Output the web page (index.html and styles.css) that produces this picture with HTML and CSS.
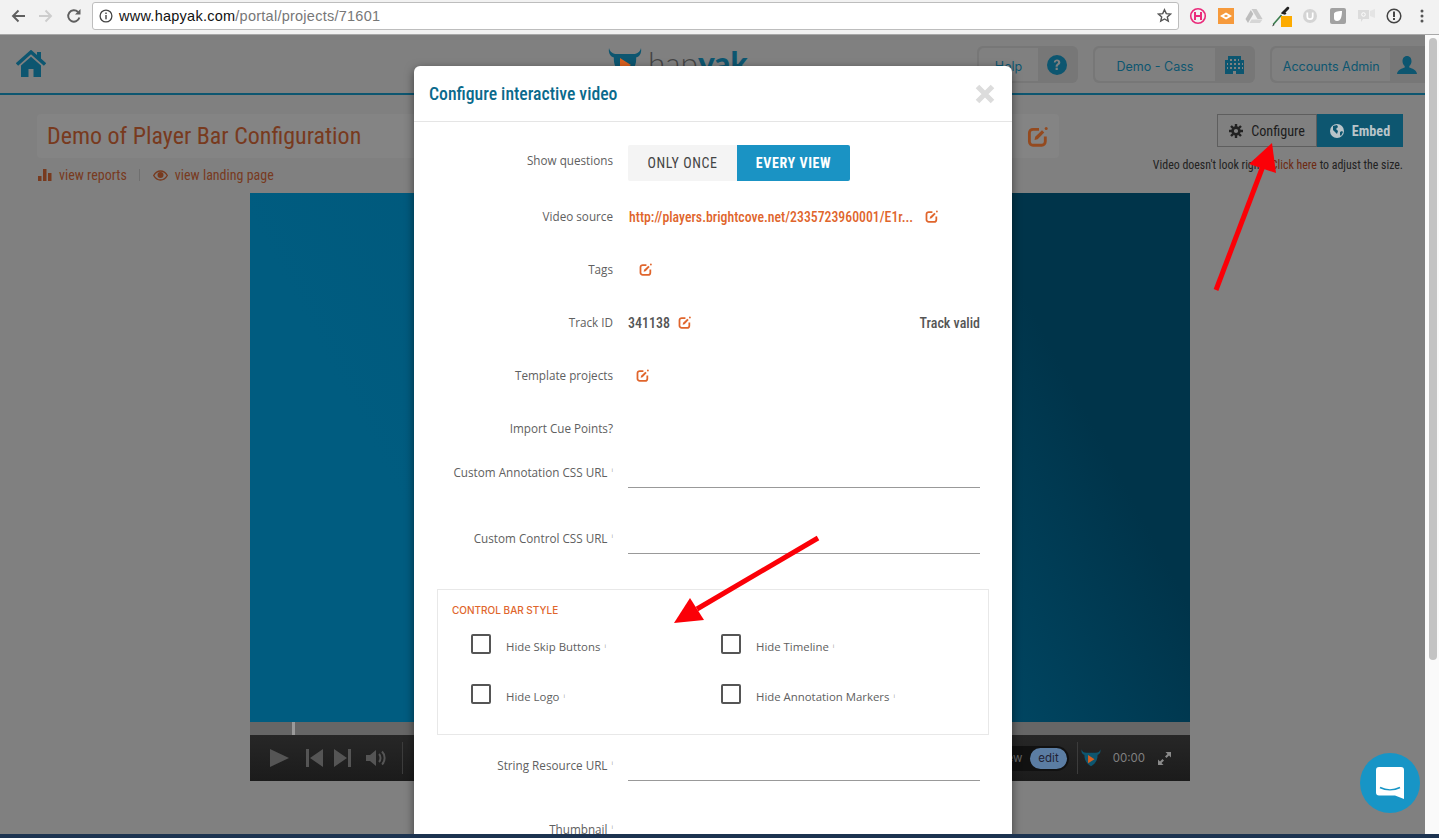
FILE: index.html
```html
<!DOCTYPE html>
<html lang="en">

<head>
    <meta charset="UTF-8">
    <title>HapYak - Demo of Player Bar Configuration</title>
    <link rel="stylesheet" href="styles.css">
</head>

<body>
    <svg class="defs" width="0" height="0">
        <symbol id="edit" viewBox="0 0 14 14">
            <path d="M8 2.2H4A2.4 2.4 0 0 0 1.6 4.6v5.8A2.4 2.4 0 0 0 4 12.8h5.8a2.4 2.4 0 0 0 2.4-2.4V7" fill="none" stroke="currentColor" stroke-width="1.9" />
            <path d="M5 9.4l.5-2.2L10 2.9l1.5 1.5L7.1 8.9z" fill="currentColor" />
            <circle cx="12.8" cy="1.6" r="1" fill="currentColor" />
        </symbol>
        <symbol id="bull" viewBox="0 0 34 30">
            <path d="M1 0c-1 6 2 10 8 10h16c6 0 9-4 8-10-1 4-4 6-8 6H9C5 6 2 4 1 0z" fill="currentColor" />
            <path d="M6 8h22c1 8-2 16-11 21C8 24 5 16 6 8z" fill="currentColor" />
            <path d="M12 10l11 7-11 7z" fill="#d9601f" />
        </symbol>
    </svg>

    <!-- Browser toolbar -->
    <div class="chrome">
        <div class="nav-buttons">
            <span class="slot">
                <svg width="16" height="16" viewBox="0 0 16 16"><path d="M15 8H3M8.5 2.5L3 8l5.5 5.500" fill="none" stroke="#5f5f5f" stroke-width="1.900" /></svg>
            </span>
            <span class="slot">
                <svg width="16" height="16" viewBox="0 0 16 16"><path d="M1 8h12M7.500 2.500L13 8l-5.500 5.500" fill="none" stroke="#cdcdcd" stroke-width="1.900" /></svg>
            </span>
            <span class="slot">
                <svg width="16" height="16" viewBox="0 0 16 16"><path d="M13.400 9.500A5.700 5.700 0 1 1 12 4" fill="none" stroke="#5f5f5f" stroke-width="1.900" /><path d="M14.500 1v5.500H9z" fill="#5f5f5f" /></svg>
            </span>
        </div>
        <div class="address">
            <svg width="14" height="14" viewBox="0 0 14 14">
                <circle cx="7" cy="7" r="5.900" fill="none" stroke="#444" stroke-width="1.300" />
                <rect x="6.300" y="6" width="1.400" height="4.300" fill="#444" />
                <rect x="6.300" y="3.500" width="1.400" height="1.500" fill="#444" />
            </svg>
            <span class="url"><b>www.hapyak.com</b>/portal/projects/71601</span>
            <svg class="star" width="15" height="15" viewBox="0 0 16 16"><path d="M8 1.800l1.900 4.200 4.500.5-3.400 3 1 4.500L8 11.700 4 14l1-4.500-3.400-3 4.500-.5z" fill="none" stroke="#555" stroke-width="1.500" /></svg>
        </div>
        <div class="extensions">
            <span class="slot">
                <svg width="18" height="18" viewBox="0 0 18 18">
                    <circle cx="9" cy="9" r="7.300" fill="none" stroke="#ea2b7b" stroke-width="1.600" />
                    <path d="M6 5v8M12 5v8M6 9h6" fill="none" stroke="#ea2b7b" stroke-width="2" />
                </svg>
            </span>
            <span class="slot">
                <svg width="16" height="16" viewBox="0 0 16 16">
                    <rect width="16" height="16" fill="#f69a3c" />
                    <path d="M8 4.500L14 8l-6 3.500L2 8z" fill="#fff" />
                    <path d="M8 6.700L10.300 8 8 9.300 5.700 8z" fill="#f69a3c" />
                </svg>
            </span>
            <span class="slot">
                <svg width="18" height="16" viewBox="0 0 18 16">
                    <path d="M6.500 1h5l6 10h-5z" fill="#c9c9c9" />
                    <path d="M5.800 2L.5 11 3 15l5.300-9z" fill="#bdbdbd" />
                    <path d="M4.500 15h10.500l2.500-3.500H6.600z" fill="#d6d6d6" />
                </svg>
            </span>
            <span class="slot">
                <svg width="22" height="24" viewBox="0 0 22 24">
                    <path d="M2.200 20.500L10.500 11" fill="none" stroke="#3c7d4f" stroke-width="1.600" />
                    <path d="M1 22.500l1.500-2.500 1 1z" fill="#222" />
                    <path d="M10 9l2.500-2.500L16 3c1.500-1 3 .5 2 2l-3.500 3.500 1 1-1.500 1.200-3.500-1z" fill="#222" />
                    <rect x="10" y="12" width="11" height="11" fill="#fdab00" />
                </svg>
            </span>
            <span class="slot">
                <svg width="16" height="16" viewBox="0 0 16 16">
                    <circle cx="8" cy="8" r="7" fill="#d4d4d4" />
                    <path d="M5.300 4.500v4a2.700 2.700 0 0 0 5.400 0v-4" fill="none" stroke="#fff" stroke-width="1.700" />
                </svg>
            </span>
            <span class="slot">
                <svg width="16" height="16" viewBox="0 0 16 16">
                    <rect width="16" height="16" rx="2" fill="#a2a2a2" />
                    <path d="M4 6c0-2 3-3 8-3 0 5-1 10-5 10-2 0-3-1-3-3z" fill="#fff" />
                </svg>
            </span>
            <span class="slot">
                <svg width="17" height="15" viewBox="0 0 17 15">
                    <path d="M0 2h11v9H5l-2 3v-3H0z" fill="#dcdcdc" />
                    <path d="M12 3l5-2v9l-5-2z" fill="#e4e4e4" />
                    <circle cx="5.500" cy="6.500" r="1.800" fill="none" stroke="#fff" />
                </svg>
            </span>
            <span class="slot">
                <svg width="16" height="16" viewBox="0 0 16 16">
                    <circle cx="8" cy="8" r="6.800" fill="none" stroke="#444" stroke-width="1.500" />
                    <rect x="7" y="3.500" width="2" height="5.500" fill="#444" />
                    <rect x="7" y="10" width="2" height="2" fill="#444" />
                </svg>
            </span>
            <span class="slot">
                <svg width="4" height="14" viewBox="0 0 4 14">
                    <circle cx="2" cy="2" r="1.500" fill="#555" />
                    <circle cx="2" cy="7" r="1.500" fill="#555" />
                    <circle cx="2" cy="12" r="1.500" fill="#555" />
                </svg>
            </span>
        </div>
    </div>

    <div class="window">
        <div class="page">
            <header class="topbar">
                <svg class="home" width="30" height="28" viewBox="0 0 30 28">
                    <path d="M1 14.500L15 2l14 12.500" fill="none" stroke="#0d5670" stroke-width="3.400" />
                    <path d="M21 2h4v8l-4-3.500z" fill="#0d5670" />
                    <path d="M5 15.500L15 6.700l10 8.800V27h-7.500v-8h-5v8H5z" fill="#0d5670" />
                </svg>
                <div class="logo">
                    <svg class="logo-mark" width="34" height="30"><use href="#bull" /></svg>
                    <span class="logo-text">hap<b>yak</b></span>
                </div>
                <div class="account-groups">
                    <div class="group group-help">
                        <span class="group-label">Help</span>
                        <span class="group-icon">
                            <svg width="20" height="20" viewBox="0 0 20 20">
                                <circle cx="10" cy="10" r="10" fill="#0d5670" />
                                <path d="M6.800 7.500C7 5.500 8.300 4.600 10 4.600c2 0 3.300 1.200 3.300 2.800 0 2.400-2.600 2.300-2.600 4.300H8.600c0-3 2.500-2.900 2.500-4.200 0-.7-.5-1.200-1.200-1.200-.8 0-1.200.5-1.300 1.300z" fill="#808080" />
                                <rect x="8.600" y="12.700" width="2.200" height="2.300" fill="#808080" />
                            </svg>
                        </span>
                    </div>
                    <div class="group group-demo">
                        <span class="group-label">Demo - Cass</span>
                        <span class="group-icon">
                            <svg width="19" height="18" viewBox="0 0 19 18">
                                <path d="M3 0h13v4h3v14H0V4h3z" fill="#0d5670" />
                                <path d="M5 3h2v2H5zM9 3h2v2H9zM13 3h1v2h-1zM5 7h2v2H5zM9 7h2v2H9zM13 7h2v2h-2zM2 7h1v2H2zM17 7h1v2h-1zM5 11h2v2H5zM9 11h2v2H9zM13 11h2v2h-2zM2 11h1v2H2zM17 11h1v2h-1zM8 15h3v3H8z" fill="#808080" />
                            </svg>
                        </span>
                    </div>
                    <div class="group group-account">
                        <span class="group-label">Accounts Admin</span>
                        <span class="group-icon">
                            <svg width="20" height="19" viewBox="0 0 20 19">
                                <path d="M10 0c3 0 4.500 2.400 4.500 5.200 0 2-1 3.800-2.200 4.800v1.500c3.500 1.300 7.200 2.400 7.700 6.500H0c.5-4.100 4.200-5.200 7.700-6.500V10C6.500 9 5.500 7.200 5.500 5.200 5.500 2.400 7 0 10 0z" fill="#0d5670" />
                            </svg>
                        </span>
                    </div>
                </div>
            </header>

            <section class="project">
                <div class="project-head">
                    <div class="project-info">
                        <div class="title-box">
                            <h1>Demo of Player Bar Configuration</h1>
                            <svg class="title-edit" width="21" height="21"><use href="#edit" /></svg>
                        </div>
                        <div class="project-links">
                            <svg width="14" height="12" viewBox="0 0 14 12"><path d="M0 7h3.500v5H0zM5 0h3.500v12H5zM10 4h3.500v8H10z" fill="#783a1e" /></svg>
                            <a>view reports</a>
                            <span class="divider"></span>
                            <svg width="15" height="11" viewBox="0 0 15 11">
                                <path d="M.7 5.500C2.500 2.400 4.800 1 7.500 1s5 1.400 6.800 4.500C12.500 8.600 10.200 10 7.500 10S2.500 8.600.7 5.500z" fill="none" stroke="#783a1e" stroke-width="1.400" />
                                <circle cx="7.500" cy="5" r="3" fill="#783a1e" />
                            </svg>
                            <a>view landing page</a>
                        </div>
                    </div>
                    <div class="project-actions">
                        <div class="action-buttons">
                            <button class="btn-configure">
                                <svg width="14" height="14" viewBox="0 0 14 14">
                                    <circle cx="7" cy="7" r="3.400" fill="none" stroke="#222" stroke-width="2.600" />
                                    <path d="M7 0v3M7 11v3M0 7h3M11 7h3M2 2l2.200 2.200M9.800 9.800L12 12M12 2L9.800 4.200M4.200 9.800L2 12" stroke="#222" stroke-width="2.400" />
                                </svg>
                                Configure
                            </button>
                            <button class="btn-embed">
                                <svg width="14" height="14" viewBox="0 0 14 14">
                                    <circle cx="7" cy="7" r="7" fill="#b9c4c9" />
                                    <path d="M3 2l4-1 1 2-2 2 2 2-1 3-2-2-2-2zM10 8l2-1 1 1-2 4-1-1z" fill="#0d5670" />
                                </svg>
                                Embed
                            </button>
                        </div>
                        <p class="size-hint">Video doesn't look right? <a>Click here</a> to adjust the size.</p>
                    </div>
                </div>

                <div class="player">
                    <div class="video"></div>
                    <div class="scrub"><span class="scrub-handle"></span></div>
                    <div class="controls">
                        <div class="controls-left">
                            <svg class="c-play" width="20" height="20" viewBox="0 0 20 20"><path d="M0 1l19 9-19 9z" /></svg>
                            <svg class="c-prev" width="18" height="18" viewBox="0 0 18 18"><path d="M0 0h3v18H0zM17 0v18L4 9z" /></svg>
                            <svg class="c-next" width="18" height="18" viewBox="0 0 18 18"><path d="M18 0h-3v18h3zM1 0v18l13-9z" /></svg>
                            <svg class="c-volume" width="21" height="18" viewBox="0 0 21 18">
                                <path d="M0 6h4l6-5v16l-6-5H0z" />
                                <path d="M13 5c2 2 2 6 0 8M16 2.500c3.500 3.500 3.500 9.500 0 13" fill="none" stroke="#555" stroke-width="2" />
                            </svg>
                            <span class="c-sep"></span>
                        </div>
                        <div class="controls-right">
                            <div class="mode-toggle"><span class="mode-view">view</span><span class="mode-edit">edit</span></div>
                            <span class="c-sep"></span>
                            <svg class="c-logo" width="20" height="18"><use href="#bull" /></svg>
                            <span class="c-time">00:00</span>
                            <svg width="13" height="13" viewBox="0 0 13 13"><path d="M7.500 0H13v5.500l-2-2-2.500 2.500-1.500-1.500L9.500 2zM5.500 13H0V7.500l2 2L4.500 7 6 8.500 3.500 11z" fill="#8a8a8a" /></svg>
                        </div>
                    </div>
                </div>
            </section>
        </div>

        <div class="scrollbar"><span class="scroll-thumb"></span></div>

        <!-- Modal -->
        <div class="modal">
            <div class="modal-head">
                <h2>Configure interactive video</h2>
                <svg width="20" height="20" viewBox="0 0 20 20"><path d="M2.500 2.500l15 15M17.500 2.500l-15 15" stroke="#dcdcdc" stroke-width="5" /></svg>
            </div>
            <div class="form">
                <div class="row row-seg">
                    <label>Show questions</label>
                    <div class="value">
                        <div class="segment"><span class="seg-off">ONLY ONCE</span><span class="seg-on">EVERY VIEW</span></div>
                    </div>
                </div>
                <div class="row">
                    <label>Video source</label>
                    <div class="value">
                        <a class="source">http://players.brightcove.net/2335723960001/E1r...</a>
                        <svg class="edit edit-source" width="13" height="13"><use href="#edit" /></svg>
                    </div>
                </div>
                <div class="row">
                    <label>Tags</label>
                    <div class="value"><svg class="edit edit-tags" width="13" height="13"><use href="#edit" /></svg></div>
                </div>
                <div class="row">
                    <label>Track ID</label>
                    <div class="value">
                        <strong>341138</strong>
                        <svg class="edit edit-track" width="13" height="13"><use href="#edit" /></svg>
                        <strong class="track-valid">Track valid</strong>
                    </div>
                </div>
                <div class="row">
                    <label>Template projects</label>
                    <div class="value"><svg class="edit edit-template" width="13" height="13"><use href="#edit" /></svg></div>
                </div>
                <div class="row">
                    <label>Import Cue Points?</label>
                    <div class="value"></div>
                </div>
                <div class="row row-input row-input-first">
                    <label>Custom Annotation CSS URL<sup>i</sup></label>
                    <div class="value"></div>
                </div>
                <div class="row row-input row-input-second">
                    <label>Custom Control CSS URL<sup>i</sup></label>
                    <div class="value"></div>
                </div>

                <fieldset class="bar-style">
                    <h3>CONTROL BAR STYLE</h3>
                    <div class="checks">
                        <div class="check"><span class="box"></span>Hide Skip Buttons<sup>i</sup></div>
                        <div class="check"><span class="box"></span>Hide Timeline<sup>i</sup></div>
                        <div class="check"><span class="box"></span>Hide Logo<sup>i</sup></div>
                        <div class="check"><span class="box"></span>Hide Annotation Markers<sup>i</sup></div>
                    </div>
                </fieldset>

                <div class="row row-input row-input-string">
                    <label>String Resource URL<sup>i</sup></label>
                    <div class="value"></div>
                </div>
                <div class="row row-thumb">
                    <label>Thumbnail<sup>i</sup></label>
                    <div class="value"></div>
                </div>
            </div>
        </div>

        <div class="chat">
            <svg width="28" height="32" viewBox="0 0 28 32">
                <path d="M3 0h22a3 3 0 0 1 3 3v29l-9-3.500H3a3 3 0 0 1-3-3V3a3 3 0 0 1 3-3z" fill="#fff" />
                <path d="M4 20.500c6 3 14 3 20 0" fill="none" stroke="#1795c6" stroke-width="1.700" />
            </svg>
        </div>
    </div>

    <div class="desktop-edge"></div>

    <!-- Red annotation arrows -->
    <svg class="arrows" width="1439" height="838" viewBox="0 0 1439 838">
        <path d="M1216 290L1263 166" stroke="#fb0007" stroke-width="5" />
        <path d="M1272 143l-23 21 27 9z" fill="#fb0007" />
        <path d="M818 538L697 609" stroke="#fb0007" stroke-width="5" />
        <path d="M674 623l16-25 14 22z" fill="#fb0007" />
    </svg>
</body>

</html>
```

FILE: styles.css
```css
* {
    box-sizing: border-box;
}

html,
body {
    margin: 0;
    height: 838px;
    overflow: hidden;
}

body {
    display: flex;
    flex-direction: column;
    font-family: "Open Sans", sans-serif;
    background-color: #808080;
}

.defs {
    position: absolute;
}

.slot {
    display: flex;
    align-items: center;
    justify-content: center;
    width: 28px;
    height: 28px;
}

/* Browser toolbar */
.chrome {
    display: flex;
    align-items: center;
    height: 35px;
    padding: 0 3px 3px 4px;
    background-color: #f2f2f2;
    border-bottom: 1px solid #a8a8a8;
}

.nav-buttons,
.extensions {
    display: flex;
}

.nav-buttons {
    margin-right: 4px;
}

.address {
    display: flex;
    align-items: center;
    flex: 1;
    height: 28px;
    margin-right: 5px;
    padding: 0 6px;
    background-color: #fff;
    border: 1px solid #bdbdbd;
    border-radius: 3px;
}

.url {
    flex: 1;
    margin-left: 6px;
    font-family: "Liberation Sans", sans-serif;
    font-size: 14.5px;
    letter-spacing: 0.25px;
    color: #777;
}

.url b {
    font-weight: 400;
    color: #111;
}

/* Page behind the modal */
.window {
    position: relative;
    display: flex;
    flex: 1;
    overflow: hidden;
}

.page {
    flex: 1;
    min-width: 0;
    overflow: hidden;
}

.scrollbar {
    width: 14px;
    padding: 3px 2px 0 4px;
    background-color: #fafafa;
}

.scroll-thumb {
    display: block;
    height: 622px;
    background-color: #c3c3c3;
    border-radius: 4px;
}

.topbar {
    display: flex;
    align-items: flex-start;
    height: 60px;
    padding: 16px 0 0 16px;
    border-bottom: 2px solid #0d5670;
}

.home {
    margin-top: -1px;
}

.logo {
    display: flex;
    align-items: flex-start;
    margin-left: 562px;
    margin-top: -3px;
}

.logo-mark {
    color: #0d5670;
}

.logo-text {
    margin: -4px 0 0 6px;
    font-family: Lato, sans-serif;
    font-size: 31.500px;
    font-weight: 300;
    color: #444;
}

.logo-text b {
    font-weight: 900;
    color: #0d5670;
}

.account-groups {
    display: flex;
    gap: 15px;
    margin-left: auto;
    margin-top: -5px;
}

.group {
    display: flex;
    height: 37px;
    padding: 2px;
    background-color: #777;
    border-radius: 6px 0 0 6px;
    overflow: hidden;
    font-family: Inter, sans-serif;
    font-size: 12.500px;
    color: #0d5670;
}

.group-label {
    display: flex;
    align-items: center;
    justify-content: center;
    padding-top: 3px;
    background-color: #808080;
    border-radius: 5px 0 0 5px;
}

.group-icon {
    display: flex;
    align-items: center;
    justify-content: center;
    padding-top: 1px;
}

.group-help {
    width: 101px;
    border-radius: 6px;
}

.group-help .group-label {
    width: 59px;
}

.group-help .group-icon {
    width: 38px;
}

.group-demo {
    width: 162px;
    border-radius: 6px;
}

.group-demo .group-label {
    width: 120px;
}

.group-demo .group-icon {
    width: 38px;
}

.group-account {
    width: 155px;
}

.group-account .group-label {
    width: 120px;
}

.group-account .group-icon {
    width: 33px;
}

.project {
    padding: 19px 22px 0 37px;
}

.project-head {
    display: flex;
    justify-content: space-between;
}

.title-box {
    display: flex;
    align-items: center;
    justify-content: space-between;
    width: 1022px;
    height: 44px;
    padding: 0 11px 0 10px;
    background-color: #848484;
    border-radius: 4px;
}

h1 {
    margin: 0;
    font-family: "Roboto Condensed", "Liberation Sans Narrow", Roboto, sans-serif;
    font-size: 24px;
    font-weight: 400;
    color: #783a1e;
}

.title-edit {
    color: #944a1f;
}

.project-links {
    display: flex;
    align-items: center;
    height: 36px;
    margin-top: -1px;
    padding-left: 1px;
    font-family: "Roboto Condensed", "Liberation Sans Narrow", Roboto, sans-serif;
    font-size: 14px;
    color: #783a1e;
}

.project-links a {
    margin-left: 7px;
}

.divider {
    width: 1px;
    height: 12px;
    margin: 0 13px 0 12px;
    background-color: #6f6f6f;
}

.project-actions {
    display: flex;
    flex-direction: column;
    align-items: flex-end;
}

.action-buttons {
    display: flex;
}

.action-buttons button {
    display: flex;
    align-items: center;
    justify-content: center;
    gap: 8px;
    height: 33px;
    padding: 0;
    font-family: "Roboto Condensed", "Liberation Sans Narrow", Roboto, sans-serif;
    font-size: 14.200px;
}

.btn-configure {
    width: 100px;
    background-color: #808080;
    border: 1px solid #5e5e5e;
    color: #1c1c1c;
}

.btn-embed {
    width: 86px;
    background-color: #0d5670;
    border: 1px solid #0d5670;
    font-weight: 700;
    color: #b9c4c9;
}

.size-hint {
    margin: 11px 0 0;
    font-family: "Roboto Condensed", "Liberation Sans Narrow", Roboto, sans-serif;
    font-size: 11.900px;
    white-space: nowrap;
    color: #222;
}

.size-hint a {
    color: #6d2a12;
}

.player {
    width: 940px;
    margin-left: 213px;
}

.video {
    height: 529px;
    background: linear-gradient(62deg, #005c80 22%, #00597c 40%, #00344a 82%);
}

.scrub {
    height: 13px;
    padding-left: 42px;
    background-color: #666;
}

.scrub-handle {
    display: block;
    width: 3px;
    height: 13px;
    background-color: #9a9a9a;
}

.controls {
    display: flex;
    align-items: center;
    justify-content: space-between;
    height: 46px;
    padding: 0 19px 0 20px;
    background: linear-gradient(#272727, #1b1b1b);
}

.controls-left,
.controls-right {
    display: flex;
    align-items: center;
    height: 100%;
}

.controls svg {
    fill: #555;
}

.controls-left .c-play {
    margin-right: 16px;
}

.controls-left .c-prev {
    margin-right: 9px;
}

.controls-left .c-next {
    margin-right: 15px;
}

.controls-left .c-volume {
    margin-right: 9px;
}

.c-sep {
    width: 1px;
    height: 32px;
    margin-left: 6px;
    background-color: #3c3c3c;
}

.mode-toggle {
    display: flex;
    align-items: center;
    height: 25px;
    padding: 2px;
    background-color: #111;
    border-radius: 13px;
    font-family: Inter, sans-serif;
    font-size: 11.500px;
    color: #666;
}

.mode-view {
    padding: 0 8px;
}

.mode-edit {
    display: flex;
    align-items: center;
    height: 21px;
    padding: 0 8px;
    background-color: #5b7da3;
    border-radius: 11px;
    color: #223;
}

.controls-right .c-sep {
    margin: 0 1px 0 8px;
}

.c-logo {
    margin-left: 2px;
    color: #0d5670;
}

.c-time {
    margin: 0 13px 0 12px;
    font-family: Inter, sans-serif;
    font-size: 11.500px;
    color: #808080;
}

/* Modal */
.modal {
    position: absolute;
    top: 31px;
    left: 414px;
    width: 598px;
    height: 800px;
    background-color: #fff;
    border-radius: 6px 6px 0 0;
    box-shadow: 0 3px 10px rgba(0, 0, 0, 0.5);
}

.modal-head {
    display: flex;
    align-items: center;
    justify-content: space-between;
    height: 56px;
    padding: 0 17px 0 15px;
    border-bottom: 1px solid #e5e5e5;
}

h2 {
    margin: 0;
    font-family: "Roboto Condensed", "Liberation Sans Narrow", Roboto, sans-serif;
    font-size: 17.700px;
    font-weight: 500;
    color: #0a6a8c;
}

.form {
    padding-top: 23px;
}

.row {
    display: flex;
    align-items: center;
    height: 53px;
}

.row label {
    width: 199px;
    margin-top: -2px;
    text-align: right;
    font-size: 11.700px;
    color: #606060;
}

.value {
    display: flex;
    align-items: center;
    width: 352px;
    margin-left: 15px;
}

.row-seg {
    height: 36px;
    margin-bottom: 9px;
}

.row-seg label {
    margin-top: -6px;
}

.segment {
    display: flex;
    height: 36px;
    font-family: "Roboto Condensed", "Liberation Sans Narrow", Roboto, sans-serif;
    font-size: 14px;
    letter-spacing: 0.6px;
    line-height: 36px;
    text-align: center;
    border-radius: 2px;
    overflow: hidden;
}

.seg-off {
    width: 109px;
    background-color: #f4f4f4;
    color: #444;
}

.seg-on {
    width: 113px;
    background-color: #1a93c4;
    font-weight: 700;
    color: #fff;
}

.source {
    margin-left: 1px;
    font-family: "Roboto Condensed", "Liberation Sans Narrow", Roboto, sans-serif;
    font-size: 13.800px;
    font-weight: 500;
    color: #e0652c;
}

.edit {
    color: #e0652c;
}

.edit-source {
    margin-left: 12px;
}

.edit-tags {
    margin-left: 11px;
}

.edit-track {
    margin-left: 8px;
}

.edit-template {
    margin-left: 8px;
}

.value strong {
    font-family: "Roboto Condensed", "Liberation Sans Narrow", Roboto, sans-serif;
    font-size: 14px;
    font-weight: 500;
    color: #555;
}

.track-valid {
    margin-left: auto;
}

sup {
    margin-left: 4px;
    font-size: 6px;
    color: #999;
}

.row-input {
    align-items: flex-end;
}

.row-input label {
    margin-top: 0;
    padding-bottom: 8px;
    line-height: 16px;
}

.row-input .value {
    height: 30px;
    border-bottom: 1px solid #999;
}

.row-input-first {
    height: 33px;
}

.row-input-second {
    height: 66px;
}

.bar-style {
    width: 552px;
    height: 146px;
    margin: 35px 0 0 23px;
    padding: 14px 14px 0;
    border: 1px solid #e8e8e8;
}

h3 {
    margin: 0;
    font-family: Inter, sans-serif;
    font-size: 10px;
    font-weight: 500;
    line-height: 12px;
    color: #e0652c;
}

.checks {
    display: grid;
    grid-template-columns: 250px 250px;
    grid-auto-rows: 50px;
    margin: 5px 0 0 19px;
}

.check {
    display: flex;
    align-items: center;
    font-size: 11.400px;
    color: #606060;
}

.box {
    width: 20px;
    height: 20px;
    margin: -4px 15px 0 0;
    border: 2px solid #555;
    border-radius: 2px;
}

.row-input-string {
    height: 46px;
}

.row-thumb {
    height: 98px;
}

/* Chat launcher */
.chat {
    position: absolute;
    top: 718px;
    left: 1360px;
    display: flex;
    align-items: center;
    justify-content: center;
    width: 60px;
    height: 60px;
    background-color: #1795c6;
    border-radius: 50%;
}

.desktop-edge {
    position: relative;
    height: 4px;
    background-color: #1c3350;
}

.arrows {
    position: absolute;
    top: 0;
    left: 0;
    pointer-events: none;
}
```
